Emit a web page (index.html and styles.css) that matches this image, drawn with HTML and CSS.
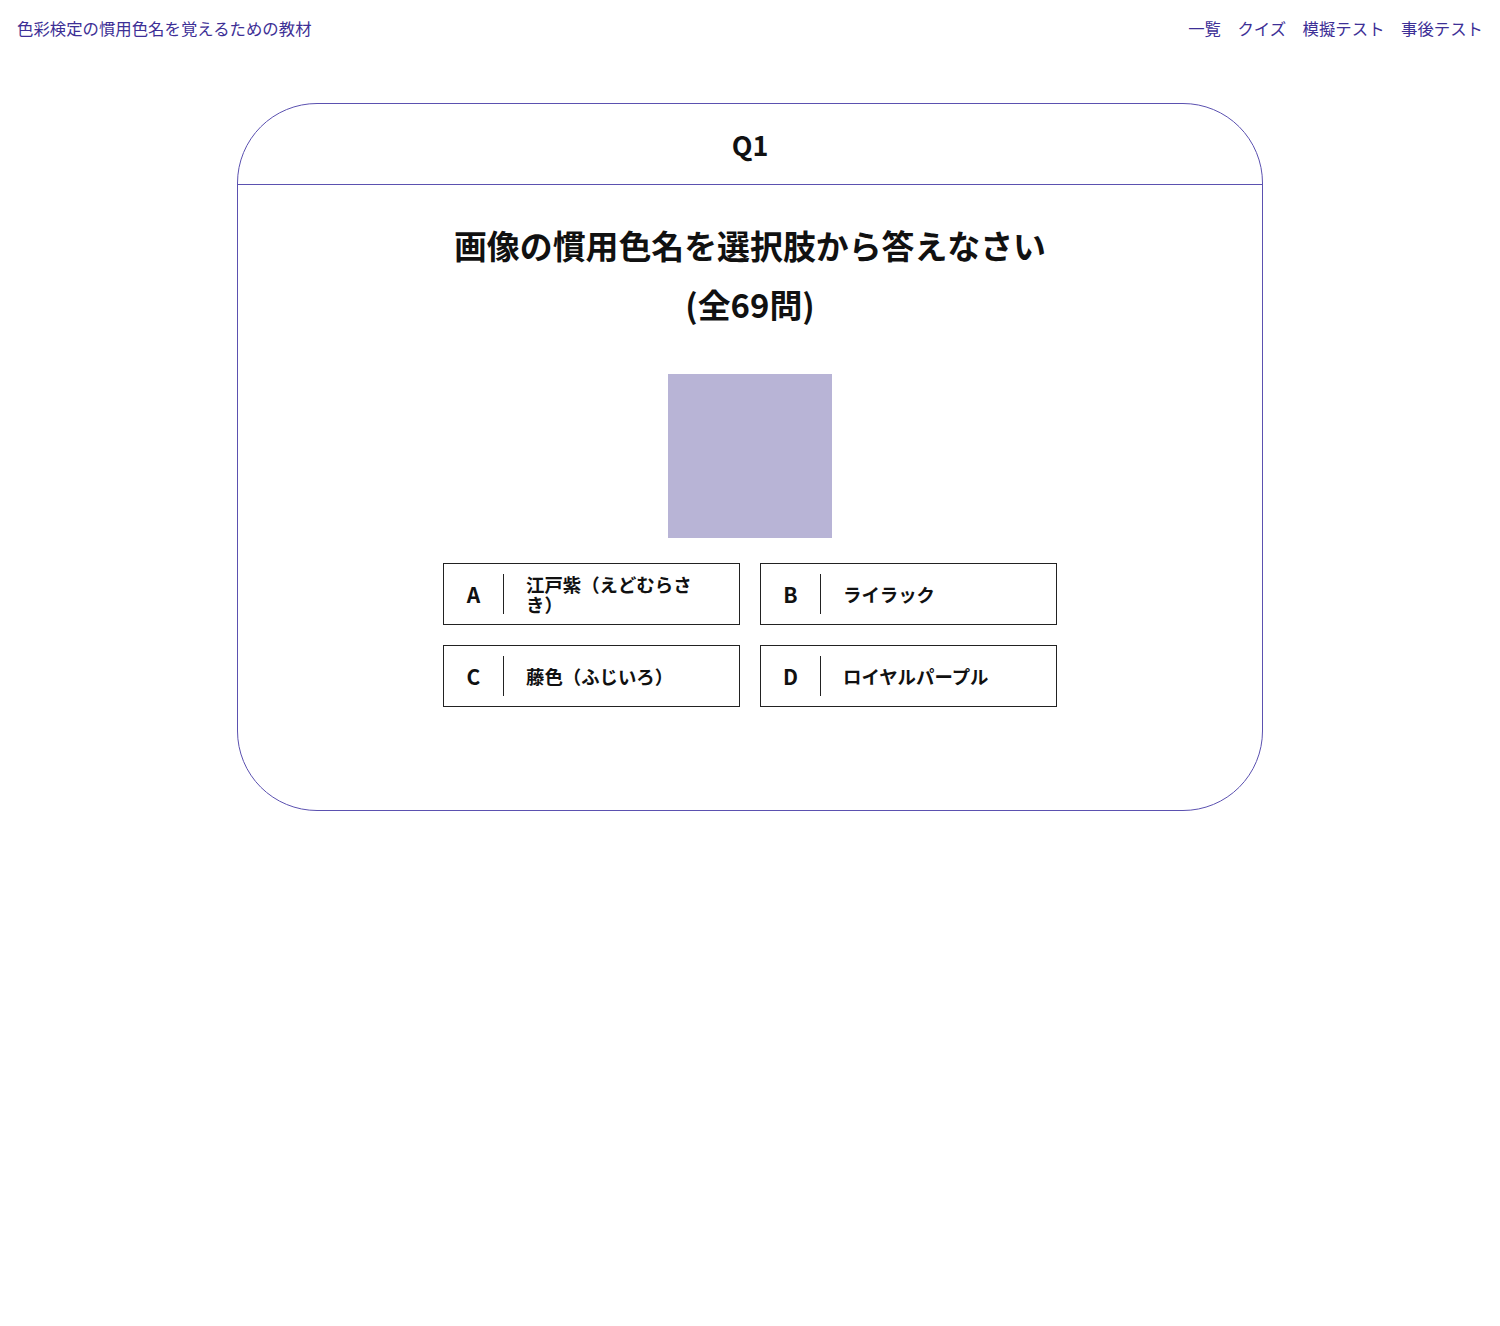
FILE: index.html
```html
<!doctype html>
<html lang="ja">
  <head>
    <meta charset="utf-8">
    <meta name="viewport" content="width=device-width">
    <title>色彩検定の慣用色名を覚えるための教材</title>

    <link rel="stylesheet" href="styles.css">
  </head>
  <body>
    <header class="site-header">
      <a class="site-title" href="#">色彩検定の慣用色名を覚えるための教材</a>
      <nav class="site-nav">
        <a href="#">一覧</a>
        <a href="#">クイズ</a>
        <a href="#">模擬テスト</a>
        <a href="#">事後テスト</a>
      </nav>
    </header>

    <main class="quiz">
      <div class="quiz-head">Q1</div>
      <div class="quiz-body">
        <h1 class="quiz-title">画像の慣用色名を選択肢から答えなさい<br>(全69問)</h1>

        <div class="swatch"></div>

        <div class="choices">
          <button class="choice"><span class="choice-key">A</span><span class="choice-text">江戸紫（えどむらさき）</span></button>
          <button class="choice"><span class="choice-key">B</span><span class="choice-text">ライラック</span></button>
          <button class="choice"><span class="choice-key">C</span><span class="choice-text">藤色（ふじいろ）</span></button>
          <button class="choice"><span class="choice-key">D</span><span class="choice-text">ロイヤルパープル</span></button>
        </div>
      </div>
    </main>
  </body>
</html>
```

FILE: styles.css
```css
* { box-sizing: border-box; }

body {
  margin: 0;
  font-family: "Noto Sans CJK JP", "Noto Sans", sans-serif;
  color: #111;
}

a {
  color: #3d2f96;
  text-decoration: none;
}

.site-header {
  display: flex;
  justify-content: space-between;
  align-items: center;
  height: 56px;
  padding: 0 17px 0 17px;
  font-size: 16.4px;
}

.site-nav {
  display: flex;
  gap: 16.5px;
}

.quiz {
  width: 1026px;
  margin: 47px auto 0;
  border: 1px solid #5b51b0;
  border-radius: 80px;
}

.quiz-head {
  height: 81px;
  border-bottom: 1px solid #5b51b0;
  display: flex;
  align-items: center;
  justify-content: center;
  font-size: 27px;
  font-weight: bold;
}

.quiz-body {
  display: flex;
  flex-direction: column;
  align-items: center;
  padding: 30px 0 103px;
}

.quiz-title {
  margin: 0;
  font-size: 32.9px;
  line-height: 59px;
  text-align: center;
}

.swatch {
  width: 164px;
  height: 164px;
  margin-top: 41px;
  background: #b8b4d6;
}

.choices {
  display: grid;
  grid-template-columns: 297px 297px;
  gap: 20px;
  margin-top: 25px;
}

.choice {
  display: flex;
  align-items: center;
  height: 62px;
  padding: 0;
  background: #fff;
  border: 1px solid #222;
  font-family: inherit;
  font-size: 18.4px;
  font-weight: bold;
  color: #111;
  text-align: left;
  cursor: pointer;
}

.choice-key {
  width: 60px;
  height: 40px;
  line-height: 40px;
  text-align: center;
  border-right: 1px solid #222;
  font-size: 21px;
}

.choice-text {
  width: 180px;
  margin-left: 22px;
  line-height: 20px;
}
```
